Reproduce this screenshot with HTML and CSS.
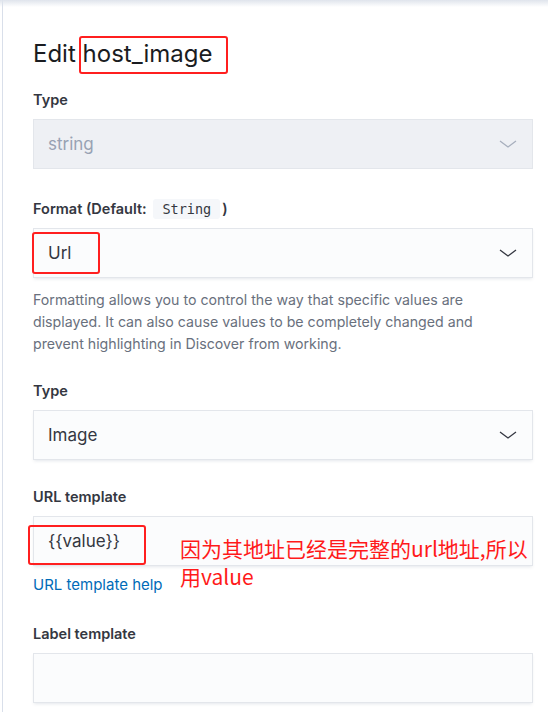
FILE: index.html
```html
<!DOCTYPE html>
<html lang="en">
<head>
<meta charset="utf-8">
<title>Edit host_image</title>
<link rel="stylesheet" href="styles.css">
</head>
<body>
<div class="topshade"></div>
<main class="panel">
  <h1 class="title">Edit <span class="marked">host_image<span class="redbox title-box"></span></span></h1>

  <div class="row row-first">
    <label class="label">Type</label>
    <div class="control disabled">
      <span class="value">string</span>
      <svg class="chev" width="18" height="8" viewBox="0 0 18 8"><path d="M1 1 L9 7 L17 1" fill="none" stroke="currentColor" stroke-width="1.3"/></svg>
    </div>
  </div>

  <div class="row row-wide">
    <label class="label">Format (Default: <code class="code">String</code>)</label>
    <div class="control">
      <span class="value">Url</span>
      <svg class="chev" width="18" height="8" viewBox="0 0 18 8"><path d="M1 1 L9 7 L17 1" fill="none" stroke="currentColor" stroke-width="1.3"/></svg>
      <span class="redbox url-box"></span>
    </div>
    <p class="help">Formatting allows you to control the way that specific values are displayed. It can also cause values to be completely changed and prevent highlighting in Discover from working.</p>
  </div>

  <div class="row row-after-help">
    <label class="label">Type</label>
    <div class="control">
      <span class="value">Image</span>
      <svg class="chev" width="18" height="8" viewBox="0 0 18 8"><path d="M1 1 L9 7 L17 1" fill="none" stroke="currentColor" stroke-width="1.3"/></svg>
    </div>
  </div>

  <div class="row">
    <label class="label">URL template</label>
    <div class="control">
      <span class="value">{{value}}</span>
      <span class="redbox value-box"></span>
      <span class="note">因为其地址已经是完整的url地址,所以<br>用value</span>
    </div>
    <a class="link" href="#">URL template help</a>
  </div>

  <div class="row row-last">
    <label class="label">Label template</label>
    <div class="control"></div>
  </div>
</main>
</body>
</html>
```

FILE: styles.css
```css
html, body {
  margin: 0;
  padding: 0;
  background: #ffffff;
}
body {
  font-family: Inter, "Noto Sans", sans-serif;
  color: #1a1c21;
  height: 712px;
  overflow: hidden;
  position: relative;
}
.topshade {
  position: absolute;
  left: 0;
  right: 0;
  top: 0;
  height: 7px;
  background: linear-gradient(#dfe4ec, rgba(255,255,255,0));
}
.panel {
  margin-left: 2px;
  border-left: 1px solid #d9dfea;
  padding: 38px 15px 0 30px;
  min-height: 712px;
  box-sizing: border-box;
}
.title {
  margin: 0;
  font-size: 24px;
  font-weight: 400;
  line-height: 32px;
  color: #1a1c21;
}
.marked {
  position: relative;
}
.redbox {
  position: absolute;
  border: 2px solid #ff1f1f;
  border-radius: 3px;
  box-sizing: border-box;
}
.title-box {
  left: -4px;
  right: -16px;
  top: -3px;
  bottom: -6px;
}
.row {
  margin-top: 27px;
}
.row-first {
  margin-top: 20px;
}
.row-wide {
  margin-top: 30px;
}
.row-after-help {
  margin-top: 26px;
}
.row-last {
  margin-top: 29px;
}
.label {
  display: block;
  font-size: 14.5px;
  font-weight: 600;
  line-height: 20px;
  color: #343741;
  margin-bottom: 9px;
}
.code {
  font-family: "DejaVu Sans Mono", "Liberation Mono", monospace;
  font-size: 13.5px;
  font-weight: 400;
  line-height: 20px;
  display: inline-block;
  background: #f5f7fa;
  color: #343741;
  padding: 0 9px;
  margin-left: 3px;
  margin-right: 2px;
  border-radius: 3px;
  vertical-align: top;
}
.control {
  position: relative;
  height: 50px;
  box-sizing: border-box;
  border: 1px solid #e3e6eb;
  background: #fbfcfd;
  box-shadow: 0 2px 3px -1px rgba(152,162,179,0.25);
  display: flex;
  align-items: center;
  padding: 0 14px;
  font-size: 17px;
  color: #343741;
}
.control.disabled {
  background: #eef0f4;
  box-shadow: none;
  color: #98a2b3;
}
.value {
  flex: 1;
}
.chev {
  color: #343741;
  margin-right: 1px;
}
.disabled .chev {
  color: #a7afbd;
}
.url-box {
  left: -2px;
  top: 3px;
  width: 68px;
  height: 42px;
}
.value-box {
  left: -6px;
  top: 8px;
  width: 118px;
  height: 40px;
}
.note {
  position: absolute;
  left: 146px;
  top: 17px;
  font-family: "Noto Sans CJK SC", sans-serif;
  font-size: 21px;
  line-height: 28px;
  color: #ff1a1a;
  white-space: nowrap;
}
.help {
  margin: 11px 0 0;
  max-width: 474px;
  font-size: 14.2px;
  line-height: 22px;
  color: #69707d;
}
.link {
  display: block;
  margin-top: 9px;
  font-size: 15px;
  line-height: 20px;
  color: #006bb8;
  text-decoration: none;
}
```
